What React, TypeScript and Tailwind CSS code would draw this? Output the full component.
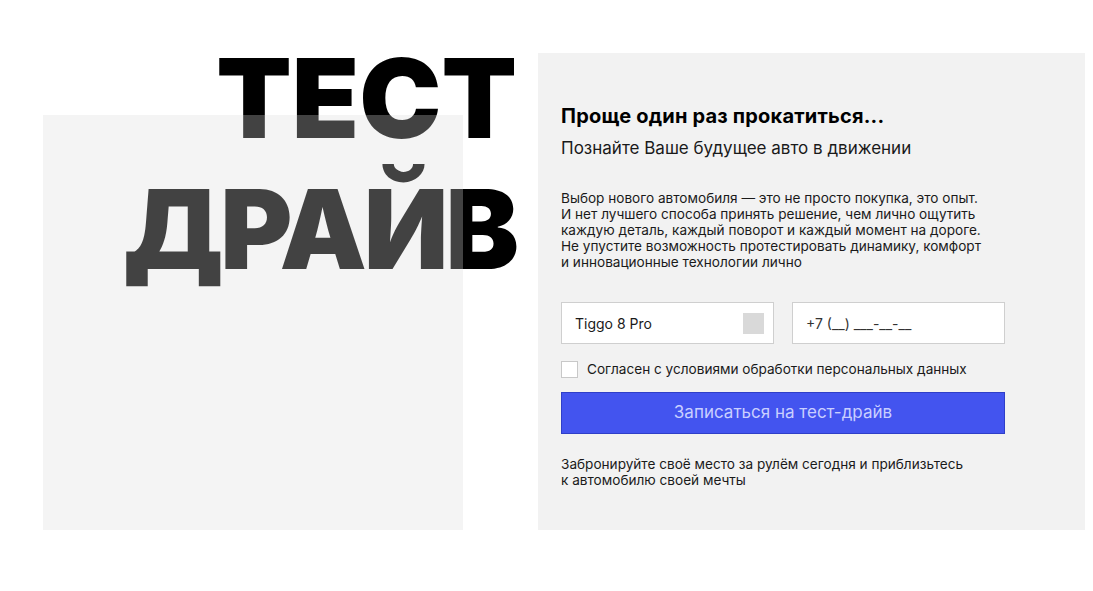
import React from 'react';

// Test drive signup block
export default function App() {
  return (
    <div
      className="min-h-[591px] w-full bg-white"
      style={{ fontFamily: 'Inter, "Noto Sans", sans-serif' }}
    >
      <div className="flex items-end pt-[53px] pl-[43px]">
        {/* Left column: big heading under a translucent plate */}
        <div className="relative h-[477px] w-[420px] shrink-0">
          <h1 className="absolute right-[-54px] top-[-20.5px] text-right text-[110px] font-black leading-[131px] text-black whitespace-nowrap">
            <span className="block tracking-[0px]">ТЕСТ</span>
            <span className="block tracking-[-3px] mr-[1px]">ДРАЙВ</span>
          </h1>
          <div className="absolute bottom-0 left-0 h-[415px] w-[420px] bg-[#d9d9d9]/30" />
        </div>

        {/* Right column: form panel */}
        <div className="ml-[75px] h-[477px] w-[547px] shrink-0 bg-[#f2f2f2] pl-[23px] pt-[51px]">
          <h2 className="text-[20px] font-bold leading-[24px] tracking-[0.2px] text-black">
            Проще один раз прокатиться...
          </h2>
          <p className="mt-[9px] text-[17px] leading-[22px] text-[#1a1a1a]">
            Познайте Ваше будущее авто в движении
          </p>
          <p className="mt-[31px] text-[13.6px] leading-[16px] text-[#1a1a1a]">
            Выбор нового автомобиля — это не просто покупка, это опыт.
            <br />
            И нет лучшего способа принять решение, чем лично ощутить
            <br />
            каждую деталь, каждый поворот и каждый момент на дороге.
            <br />
            Не упустите возможность протестировать динамику, комфорт
            <br />
            и инновационные технологии лично
          </p>

          <div className="mt-[32px] flex gap-[18px]">
            <div className="flex h-[42px] w-[213px] items-center justify-between border border-[#cfcfcf] bg-white pl-[13px] pr-[9px]">
              <span className="text-[14px] text-[#1a1a1a]">Tiggo 8 Pro</span>
              <span className="h-[21px] w-[21px] bg-[#d9d9d9]" />
            </div>
            <div className="flex h-[42px] w-[213px] items-center border border-[#cfcfcf] bg-white pl-[13px]">
              <span className="text-[14px] text-[#333]">+7 (__) ___-__-__</span>
            </div>
          </div>

          <label className="mt-[17px] flex items-center gap-[9px]">
            <span className="h-[17px] w-[17px] border border-[#c8c8c8] bg-white" />
            <span className="text-[13.6px] leading-[17px] text-[#1a1a1a]">
              Согласен с условиями обработки персональных данных
            </span>
          </label>

          <button className="mt-[14px] flex h-[42px] w-[444px] items-center justify-center border border-[#2f3fc8] bg-[#4354ef] text-[17px] text-[#c9cfff]">
            Записаться на тест-драйв
          </button>

          <p className="mt-[22px] text-[13.6px] leading-[16px] text-[#1a1a1a]">
            Забронируйте своё место за рулём сегодня и приблизьтесь
            <br />
            к автомобилю своей мечты
          </p>
        </div>
      </div>
    </div>
  );
}
